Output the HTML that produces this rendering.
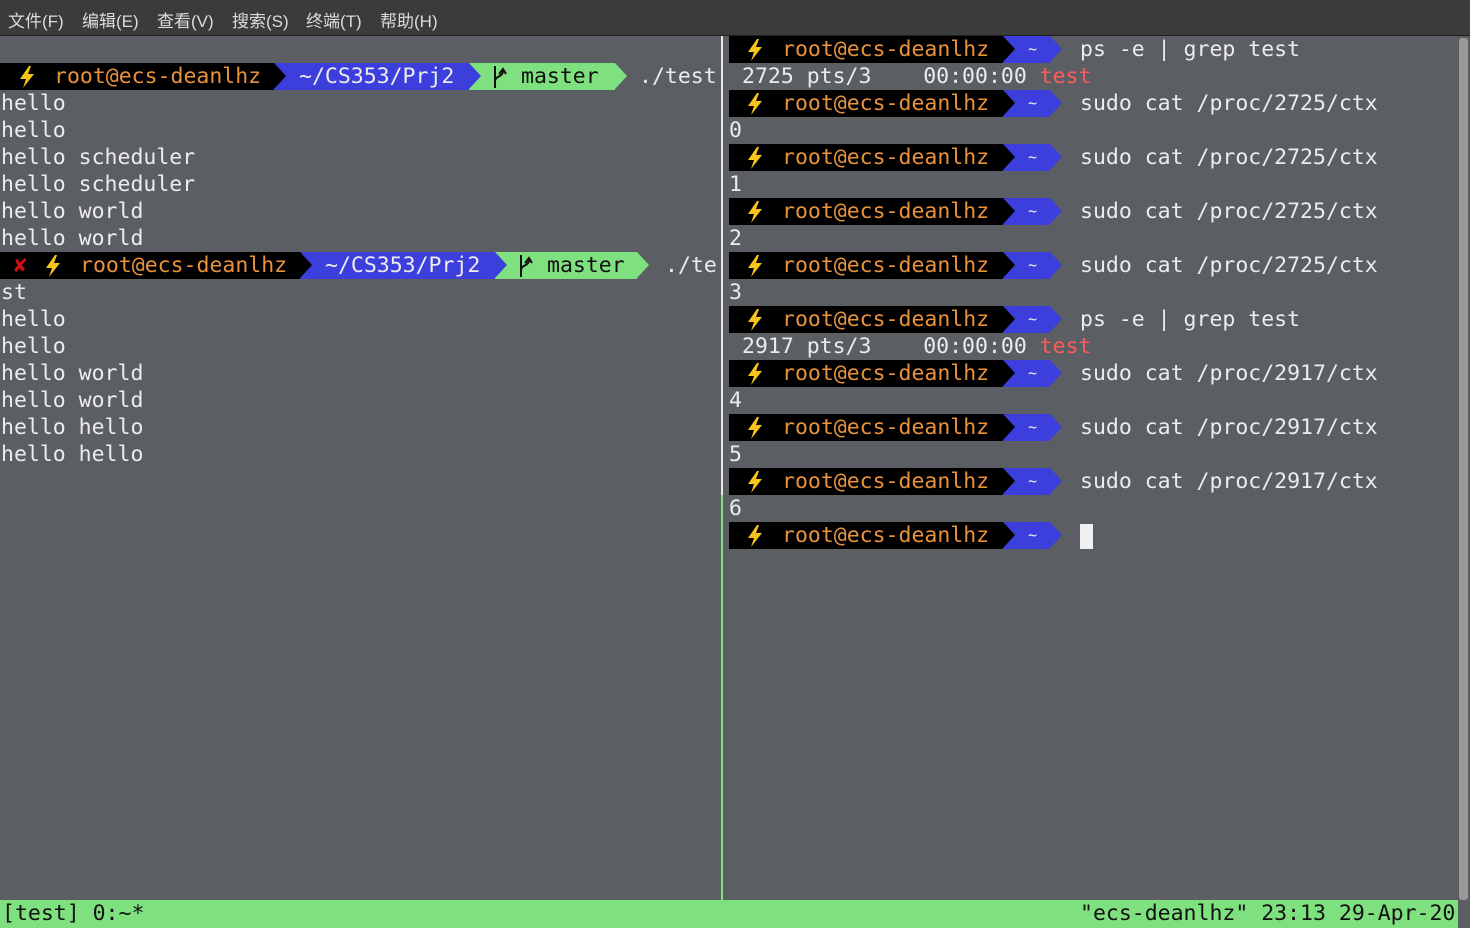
<!DOCTYPE html>
<html><head><meta charset="utf-8"><style>
*{margin:0;padding:0;box-sizing:border-box}
body{width:1470px;height:928px;overflow:hidden;background:#5b5f63;font-family:"DejaVu Sans Mono","Liberation Mono",monospace;font-size:21.5px;color:#ececec;position:relative}
.menu{position:absolute;left:0;top:0;width:1470px;height:36px;background:#3b3b3b;border-bottom:1px solid #202020;font-family:"Liberation Sans","Noto Sans CJK SC",sans-serif;font-size:17px;color:#dcdcdc}
.menu span{position:absolute;top:7px}
.t{position:absolute;white-space:pre;line-height:27px;height:27px}
.seg{position:absolute;height:27px}
.arr{position:absolute;width:0;height:0;border-top:13.5px solid transparent;border-bottom:13.5px solid transparent;border-left:12px solid}
.o{color:#e8923c}
.k{color:#111}
.r{color:#ff5a5a}
svg{position:absolute}
</style></head><body>
<div class="menu"><span style="left:8px">文件(F)</span><span style="left:82px">编辑(E)</span><span style="left:157px">查看(V)</span><span style="left:232px">搜索(S)</span><span style="left:306px">终端(T)</span><span style="left:380px">帮助(H)</span></div>

<div style="position:absolute;left:721px;top:36px;width:2px;height:459px;background:#e8e8e8"></div>
<div style="position:absolute;left:721px;top:495px;width:2px;height:405px;background:#7fe07f"></div>
<div style="position:absolute;left:1459px;top:38px;width:9px;height:862px;background:#9a9a9a;border-radius:3px"></div>

<div id="lp"></div>
<div id="rp"></div>
<script>
function bolt(x,t){return '<svg style="left:'+x+'px;top:'+(t+2)+'px" width="22" height="24" viewBox="0 0 22 24"><path d="M13 1 L4 14 L10 14 L7 23 L18 9 L12 9 L15 1 Z" fill="#f7c51a"/></svg>';}
function branch(x,t){return '<svg style="left:'+x+'px;top:'+(t+1)+'px" width="18" height="26" viewBox="0 0 18 26"><path d="M4 2 V24 M4 17 C4 12 12 13 12 7 M8 10 L12 5 L15 10" stroke="#111" stroke-width="2" fill="none"/></svg>';}
var h="";
function lprompt(t,off,bw,gw,x){
h+='<div class="seg" style="left:0;top:'+t+'px;width:'+bw+'px;background:#000"></div>';
h+='<div class="seg" style="left:'+bw+'px;top:'+t+'px;width:195px;background:#3c3fdc"></div>';
h+='<div class="arr" style="left:'+bw+'px;top:'+t+'px;border-left-color:#000"></div>';
var g=bw+195;
h+='<div class="seg" style="left:'+g+'px;top:'+t+'px;width:'+gw+'px;background:#7fe07f"></div>';
h+='<div class="arr" style="left:'+g+'px;top:'+t+'px;border-left-color:#3c3fdc"></div>';
h+='<div class="arr" style="left:'+(g+gw)+'px;top:'+t+'px;border-left-color:#7fe07f"></div>';
if(x)h+='<div class="t" style="left:14px;top:'+t+'px;color:#d01010;font-weight:bold">✘</div>';
h+=bolt(16+off,t);
h+='<div class="t o" style="left:'+(54+off)+'px;top:'+t+'px">root@ecs-deanlhz</div>';
h+='<div class="t" style="left:'+(bw+25)+'px;top:'+t+'px">~/CS353/Prj2</div>';
h+=branch(g+22,t);
h+='<div class="t k" style="left:'+(g+52)+'px;top:'+t+'px">master</div>';
}
lprompt(63,0,274,146,false);
h+='<div class="t" style="left:639px;top:63px">./test</div>';
lprompt(252,26,300,142,true);
h+='<div class="t" style="left:665px;top:252px">./te</div>';
var L=[[90,"hello"],[117,"hello"],[144,"hello scheduler"],[171,"hello scheduler"],[198,"hello world"],[225,"hello world"],[279,"st"],[306,"hello"],[333,"hello"],[360,"hello world"],[387,"hello world"],[414,"hello hello"],[441,"hello hello"]];
L.forEach(function(a){h+='<div class="t" style="left:1px;top:'+a[0]+'px">'+a[1]+'</div>';});
document.getElementById("lp").innerHTML=h;
h="";
var rows=[["p","ps -e | grep test"],["o","2725"],["p","sudo cat /proc/2725/ctx"],["n","0"],["p","sudo cat /proc/2725/ctx"],["n","1"],["p","sudo cat /proc/2725/ctx"],["n","2"],["p","sudo cat /proc/2725/ctx"],["n","3"],["p","ps -e | grep test"],["o","2917"],["p","sudo cat /proc/2917/ctx"],["n","4"],["p","sudo cat /proc/2917/ctx"],["n","5"],["p","sudo cat /proc/2917/ctx"],["n","6"],["p",""]];
rows.forEach(function(r,i){var t=36+27*i;
if(r[0]=="p"){
h+='<div class="seg" style="left:729px;top:'+t+'px;width:274px;background:#000"></div>';
h+='<div class="seg" style="left:1003px;top:'+t+'px;width:47px;background:#3c3fdc"></div>';
h+='<div class="arr" style="left:1003px;top:'+t+'px;border-left-color:#000"></div>';
h+='<div class="arr" style="left:1050px;top:'+t+'px;border-left-color:#3c3fdc"></div>';
h+=bolt(744,t);
h+='<div class="t o" style="left:782px;top:'+t+'px">root@ecs-deanlhz</div>';
h+='<div class="t" style="left:1028px;top:'+t+'px;font-size:15px;color:#eee">~</div>';
if(r[1])h+='<div class="t" style="left:1080px;top:'+t+'px">'+r[1]+'</div>';
else h+='<div style="position:absolute;left:1080px;top:'+(t+2)+'px;width:13px;height:25px;background:#f0f0f0"></div>';
}else if(r[0]=="o"){
h+='<div class="t" style="left:742px;top:'+t+'px">'+r[1]+' pts/3    00:00:00 <span class="r">test</span></div>';
}else{
h+='<div class="t" style="left:729px;top:'+t+'px">'+r[1]+'</div>';
}});
document.getElementById("rp").innerHTML=h;
</script>

<div style="position:absolute;left:0;top:900px;width:1458px;height:28px;background:#7fe07f"></div>
<div class="t k" style="left:2px;top:900px;line-height:28px">[test] 0:~*</div>
<div class="t k" style="left:1080px;top:900px;line-height:28px">"ecs-deanlhz" 23:13 29-Apr-20</div>
</body></html>
